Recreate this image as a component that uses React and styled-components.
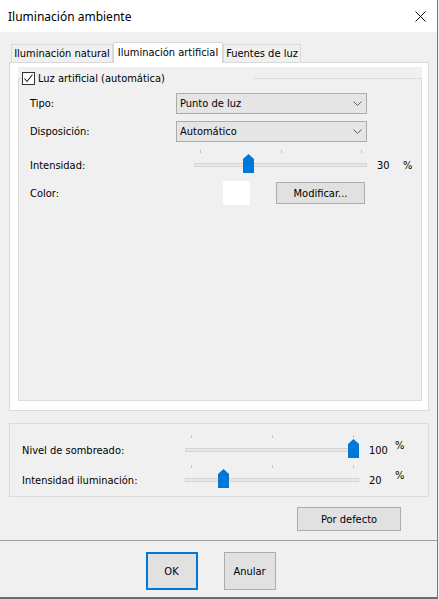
import React from 'react';
import styled, { createGlobalStyle } from 'styled-components';

const GlobalStyle = createGlobalStyle`
  html, body {
    margin: 0;
    padding: 0;
    background: #f0f0f0;
  }
  body {
    font-family: "DejaVu Sans Condensed", "Liberation Sans", sans-serif;
    font-size: 11px;
    color: #000;
  }
  * {
    box-sizing: border-box;
  }
`;

const Window = styled.div`
  width: 438px;
  height: 599px;
  display: flex;
  flex-direction: column;
  background: #f0f0f0;
  border-right: 1px solid #7a7a7a;
  border-bottom: 2px solid #6d6d6d;
`;

const TitleBar = styled.div`
  height: 32px;
  flex: none;
  background: #fff;
  display: flex;
  align-items: center;
  justify-content: space-between;
  padding: 0 11px 0 8px;
  font-family: "Noto Sans", "Open Sans", sans-serif;
  font-size: 12px;
`;

const Body = styled.div`
  padding: 10px 8px 0 9px;
`;

const TabRow = styled.div`
  display: flex;
  align-items: flex-end;
  height: 20px;
  margin-left: 2px;
  position: relative;
  z-index: 1;
`;

const Tab = styled.div`
  width: ${p => p.width}px;
  height: ${p => (p.active ? 21 : 18)}px;
  margin-bottom: ${p => (p.active ? -1 : 0)}px;
  background: ${p => (p.active ? '#fff' : '#f0f0f0')};
  border: 1px solid #d9d9d9;
  border-bottom: none;
  display: flex;
  align-items: center;
  justify-content: center;
  padding-bottom: ${p => (p.active ? 2 : 0)}px;
  white-space: nowrap;
`;

const TabPage = styled.div`
  height: 349px;
  border: 1px solid #d9d9d9;
  background: #fff;
  padding: 4px 6px 9px 8px;
  display: flex;
`;

const PageFill = styled.div`
  flex: 1;
  background: #f0f0f0;
  padding-top: 4px;
  display: flex;
  flex-direction: column;
`;

const Group = styled.fieldset`
  flex: 1;
  margin: 0;
  border: 1px solid #dcdcdc;
  padding: 0 0 0 3px;
  min-width: 0;
`;

const Legend = styled.legend`
  width: 232px;
  height: 14px;
  padding: 0;
  display: flex;
  align-items: center;
  gap: 3px;
`;

const CheckBox = styled.span`
  width: 13px;
  height: 13px;
  flex: none;
  background: #fff;
  border: 1px solid #333;
  display: flex;
  align-items: center;
  justify-content: center;
`;

const Rows = styled.div`
  padding-left: 8px;
  margin-top: 8px;
`;

const Row = styled.div`
  display: flex;
  align-items: center;
  height: ${p => p.h}px;
  margin-top: ${p => p.mt || 0}px;
`;

const Label = styled.span`
  width: ${p => p.w}px;
  flex: none;
  white-space: nowrap;
`;

const Select = styled.div`
  width: 191px;
  height: 21px;
  background: #e5e5e5;
  border: 1px solid #acacac;
  padding: 0 4px 0 3px;
  display: flex;
  align-items: center;
  justify-content: space-between;
`;

const SliderBox = styled.div`
  position: relative;
  width: ${p => p.w}px;
  height: 30px;
  flex: none;
  margin-left: ${p => p.ml || 0}px;
`;

const Ticks = styled.div`
  height: 3px;
  display: flex;
  justify-content: space-between;
  padding: 0 5px 0 6px;
`;

const Tick = styled.span`
  width: 1px;
  height: 3px;
  background: #c4c4c4;
`;

const Track = styled.div`
  margin-top: 10px;
  height: 4px;
  background: #e7e7e7;
  border: 1px solid #d6d6d6;
`;

const Thumb = styled.svg`
  position: absolute;
  top: 4px;
  width: 11px;
  height: 19px;
`;

const Value = styled.span`
  width: 26px;
  margin-left: 10px;
  flex: none;
`;

const Percent = styled.span`
  margin-bottom: ${p => (p.raised ? 10 : 0)}px;
`;

const Swatch = styled.div`
  width: 27px;
  height: 24px;
  background: #fff;
  margin-left: 47px;
  flex: none;
`;

const Button = styled.button`
  width: ${p => p.w}px;
  height: ${p => p.h}px;
  margin-left: ${p => p.ml || 0}px;
  padding: 0;
  background: #e1e1e1;
  border: ${p => (p.primary ? '2px solid #0078d7' : '1px solid #adadad')};
  font: inherit;
  color: #000;
  flex: none;
`;

const Box = styled.div`
  margin-top: 12px;
  border: 1px solid #dcdcdc;
  padding: 11px 0 1px 12px;
`;

const ButtonRow = styled.div`
  margin-top: 10px;
  display: flex;
  justify-content: flex-end;
  padding-right: 28px;
`;

const Separator = styled.div`
  margin-top: 9px;
  height: 1px;
  background: #a0a0a0;
  flex: none;
`;

const Footer = styled.div`
  flex: 1;
  display: flex;
  justify-content: center;
  gap: 26px;
  padding: 11px 16px 0 0;
`;

const Chevron = () => (
  <svg width="9" height="5" viewBox="0 0 9 5">
    <polyline points="0.5,0.5 4.5,4.5 8.5,0.5" fill="none" stroke="#606060" strokeWidth="1" />
  </svg>
);

const Slider = ({ width, value, ml }) => {
  const left = 6 + (value / 100) * (width - 12) - 5;
  return (
    <SliderBox w={width} ml={ml}>
      <Ticks>
        <Tick />
        <Tick />
        <Tick />
      </Ticks>
      <Track />
      <Thumb viewBox="0 0 11 19" style={{ left }}>
        <polygon points="5.5,0 11,5 11,19 0,19 0,5" fill="#0078d7" />
      </Thumb>
    </SliderBox>
  );
};

const App = () => (
  <>
    <GlobalStyle />
    <Window>
      <TitleBar>
        <span>Iluminación ambiente</span>
        <svg width="11" height="11" viewBox="0 0 11 11">
          <path d="M0.5 0.5 L10.5 10.5 M10.5 0.5 L0.5 10.5" stroke="#111" strokeWidth="1" />
        </svg>
      </TitleBar>

      <Body>
        <TabRow>
          <Tab width={102}>Iluminación natural</Tab>
          <Tab width={110} active>Iluminación artificial</Tab>
          <Tab width={78}>Fuentes de luz</Tab>
        </TabRow>

        <TabPage>
          <PageFill>
            <Group>
              <Legend>
                <CheckBox>
                  <svg width="11" height="11" viewBox="0 0 11 11">
                    <polyline points="1.5,5.5 4,8.5 9.5,1.5" fill="none" stroke="#222" strokeWidth="1.1" />
                  </svg>
                </CheckBox>
                Luz artificial (automática)
              </Legend>
              <Rows>
                <Row h={21}>
                  <Label w={146}>Tipo:</Label>
                  <Select>
                    Punto de luz
                    <Chevron />
                  </Select>
                </Row>
                <Row h={21} mt={7}>
                  <Label w={146}>Disposición:</Label>
                  <Select>
                    Automático
                    <Chevron />
                  </Select>
                </Row>
                <Row h={30} mt={8}>
                  <Label w={146}>Intensidad:</Label>
                  <Slider width={173} value={30} ml={18} />
                  <Value>30</Value>
                  <Percent>%</Percent>
                </Row>
                <Row h={24} mt={1}>
                  <Label w={146}>Color:</Label>
                  <Swatch />
                  <Button w={89} h={22} ml={26}>Modificar...</Button>
                </Row>
              </Rows>
            </Group>
          </PageFill>
        </TabPage>

        <Box>
          <Row h={30}>
            <Label w={163}>Nivel de sombreado:</Label>
            <Slider width={174} value={100} />
            <Value>100</Value>
            <Percent raised>%</Percent>
          </Row>
          <Row h={30}>
            <Label w={163}>Intensidad iluminación:</Label>
            <Slider width={174} value={20} />
            <Value>20</Value>
            <Percent raised>%</Percent>
          </Row>
        </Box>

        <ButtonRow>
          <Button w={104} h={24}>Por defecto</Button>
        </ButtonRow>
      </Body>

      <Separator />

      <Footer>
        <Button w={52} h={38} primary>OK</Button>
        <Button w={52} h={38}>Anular</Button>
      </Footer>
    </Window>
  </>
);

export default App;
